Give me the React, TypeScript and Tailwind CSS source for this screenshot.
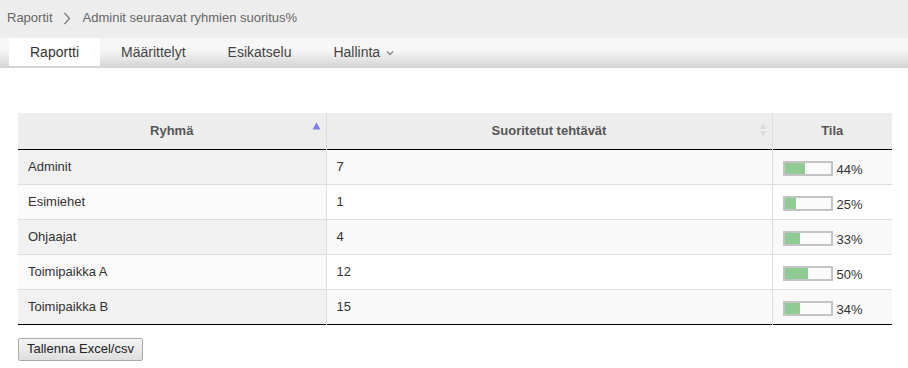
import React from 'react';

interface GroupRow {
  name: string;
  done: number;
  percent: number;
}

const rows: GroupRow[] = [
  { name: 'Adminit', done: 7, percent: 44 },
  { name: 'Esimiehet', done: 1, percent: 25 },
  { name: 'Ohjaajat', done: 4, percent: 33 },
  { name: 'Toimipaikka A', done: 12, percent: 50 },
  { name: 'Toimipaikka B', done: 15, percent: 34 },
];

const tabs = ['Raportti', 'Määrittelyt', 'Esikatselu', 'Hallinta'];

export default function App() {
  return (
    <div className="w-[908px] h-[368px] bg-white text-[#333] font-['Liberation_Sans',Arial,sans-serif]">
      {/* Breadcrumb */}
      <div className="h-[38px] bg-[#ededed] flex items-center px-[7px] pb-[2px] text-[13px] text-[#666]">
        <span>Raportit</span>
        <svg width="8" height="13" viewBox="0 0 8 13" className="ml-[10px] mr-[12px]">
          <path d="M1.5 1 L6.5 6.5 L1.5 12" fill="none" stroke="#777" strokeWidth="1.2" />
        </svg>
        <span>Adminit seuraavat ryhmien suoritus%</span>
      </div>

      {/* Tabs */}
      <div className="h-[30px] bg-gradient-to-b from-[#f7f7f7] from-40% to-[#d3d3d3] flex pl-[9px] text-[14px] text-[#444]">
        {tabs.map((tab, i) => (
          <div
            key={tab}
            className={`h-[28px] flex items-center px-[21px] ${i === 0 ? 'bg-white text-[#333]' : ''}`}
          >
            {tab}
            {tab === 'Hallinta' && (
              <svg width="8" height="6" viewBox="0 0 8 6" className="ml-[6px] mt-[2px]">
                <path d="M1 1.5 L4 4.5 L7 1.5" fill="none" stroke="#888" strokeWidth="1.3" />
              </svg>
            )}
          </div>
        ))}
      </div>

      {/* Table */}
      <div className="pt-[45px] px-[18px]">
        <table className="w-[874px] border-collapse text-[13px]">
          <thead>
            <tr className="h-[36px] bg-[#ededed] text-[#555] border-b border-black">
              <th className="w-[308px] relative font-bold border-r border-[#ddd]">
                Ryhmä
                <svg width="9" height="8" viewBox="0 0 9 8" className="absolute right-[5px] top-[9px]">
                  <path d="M4.5 0.5 L8.5 7.5 L0.5 7.5 Z" fill="#8080e0" />
                </svg>
              </th>
              <th className="w-[446px] relative font-bold border-r border-[#ddd]">
                Suoritetut tehtävät
                <svg width="8" height="14" viewBox="0 0 8 14" className="absolute right-[5px] top-[10px]">
                  <path d="M4 0.5 L7.5 6 L0.5 6 Z" fill="#dcdcdc" />
                  <path d="M4 13.5 L7.5 8 L0.5 8 Z" fill="#dcdcdc" />
                </svg>
              </th>
              <th className="font-bold">Tila</th>
            </tr>
          </thead>
          <tbody>
            {rows.map((row, i) => {
              const odd = i % 2 === 0;
              return (
                <tr
                  key={row.name}
                  className={`h-[35px] ${i < rows.length - 1 ? 'border-b border-[#ddd]' : 'border-b border-black'} ${odd ? 'bg-[#f9f9f9]' : 'bg-white'}`}
                >
                  <td className={`px-[10px] border-r border-[#ddd] ${odd ? 'bg-[#f1f1f1]' : 'bg-[#fafafa]'}`}>
                    {row.name}
                  </td>
                  <td className="px-[10px] border-r border-[#ddd]">{row.done}</td>
                  <td className="px-[10px]">
                    <div className="flex items-center pt-[4px]">
                      <div className="w-[50px] h-[15px] border-2 border-[#c4c4c4] bg-[#fafafa]">
                        <div className="h-full bg-[#8fcb93]" style={{ width: `${row.percent}%` }} />
                      </div>
                      <span className="ml-[4px] mt-[3px]">{row.percent}%</span>
                    </div>
                  </td>
                </tr>
              );
            })}
          </tbody>
        </table>

        <button className="mt-[13px] h-[23px] px-[8px] text-[13px] text-[#222] border border-[#aaa] rounded-[2px] bg-gradient-to-b from-[#f6f6f6] to-[#dedede]">
          Tallenna Excel/csv
        </button>
      </div>
    </div>
  );
}
